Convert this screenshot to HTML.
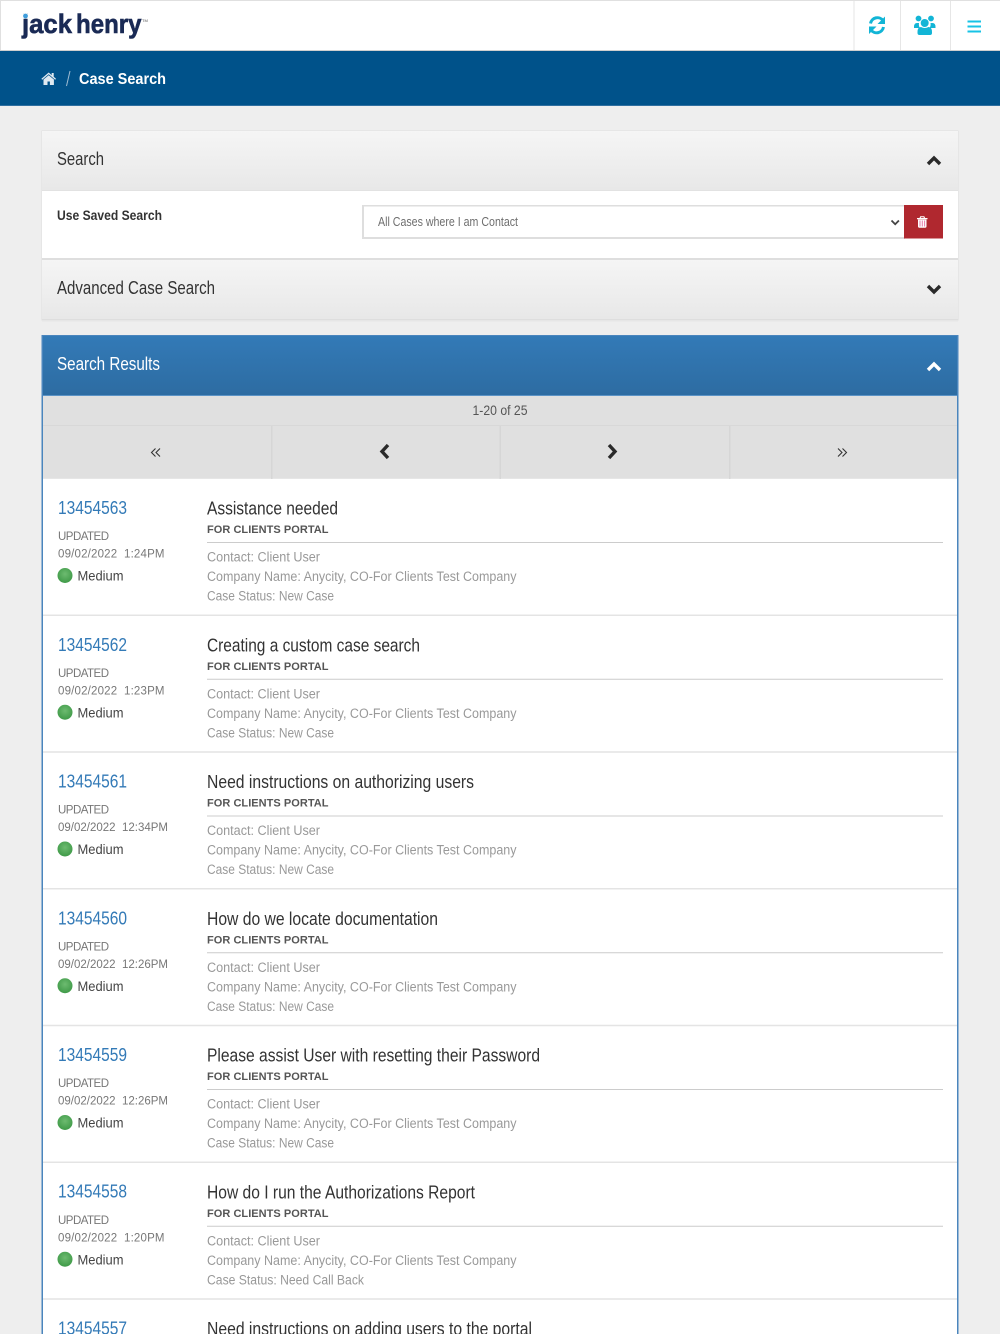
<!DOCTYPE html>
<html lang="en"><head><meta charset="utf-8"><title>Case Search</title>
<style>
html,body{margin:0;padding:0;background:#eee;width:1000px;height:1334px;overflow:hidden}
svg{display:block}
text{font-family:"Liberation Sans",sans-serif}
.n{font-family:"Liberation Sans Narrow","Liberation Sans",sans-serif}
.id{font-size:18px;fill:#337ab7}
.tt{font-size:18px;fill:#333}
.pt{font-size:11px;font-weight:700;fill:#555}
.g{font-size:13.5px;fill:#999}
.u{font-size:11.5px;fill:#777}
.m{font-size:13.5px;fill:#444}
</style></head><body>
<svg xmlns="http://www.w3.org/2000/svg" width="1000" height="1334" viewBox="0 0 1000 1334">
<defs>
<linearGradient id="gh" x1="0" y1="0" x2="0" y2="1"><stop offset="0" stop-color="#f5f5f5"/><stop offset="1" stop-color="#e8e8e8"/></linearGradient>
<linearGradient id="bh" x1="0" y1="0" x2="0" y2="1"><stop offset="0" stop-color="#337ab7"/><stop offset="1" stop-color="#2d6ca2"/></linearGradient>
<radialGradient id="dot" cx="0.5" cy="0.4" r="0.6"><stop offset="0" stop-color="#6dbb70"/><stop offset="1" stop-color="#3f9a48"/></radialGradient>
</defs>
<rect width="1000" height="1334" fill="#eee"/>

<!-- top nav -->
<rect width="1000" height="51" fill="#fff"/>
<rect width="1000" height="1" fill="#e0e0e0"/>
<rect width="1" height="51" fill="#e0e0e0"/>
<rect y="50" width="1000" height="1" fill="#cfcfcf"/>
<rect x="853.5" y="1" width="1" height="49" fill="#e6e6e6"/>
<rect x="900" y="1" width="1" height="49" fill="#e6e6e6"/>
<rect x="950" y="1" width="1" height="49" fill="#e6e6e6"/>
<text x="22" y="33" font-size="27" font-weight="700" fill="#1a2a55" stroke="#1a2a55" stroke-width="0.6" textLength="50" lengthAdjust="spacingAndGlyphs">jack</text>
<text x="76" y="33" font-size="27" font-weight="700" fill="#1a2a55" stroke="#1a2a55" stroke-width="0.6" textLength="65.500" lengthAdjust="spacingAndGlyphs">henry</text>
<circle cx="25.500" cy="15.500" r="2.900" fill="#fff"/>
<circle cx="25.500" cy="16" r="2.400" fill="#3f9ddb"/>
<text x="142" y="22" font-size="4" fill="#555">TM</text>
<!-- refresh -->
<g fill="none" stroke="#12b5d6" stroke-width="3">
<path d="M870.500 23.500a7 7 0 0 1 12.500-3"/>
<path d="M883.500 27a7 7 0 0 1-12.500 3"/>
</g>
<path d="M885 16.500v7.500h-7.500zM869 34v-7.500h7.500z" fill="#12b5d6"/>
<!-- users -->
<g fill="#12b5d6">
<circle cx="918.500" cy="18.500" r="2.900"/><circle cx="931" cy="18.500" r="2.900"/>
<circle cx="924.700" cy="23" r="4"/>
<path d="M914 27q0-4 3-4h2q-.5 3 1 5h-6zM935.500 27q0-4-3-4h-2q.5 3-1 5h6z"/>
<path d="M917.500 32q0-5 3.500-5 3.700 2 7.500 0 3.500 0 3.500 5v1q0 2-2 2h-10.500q-2 0-2-2z"/>
</g>
<!-- bars -->
<g fill="#17c3e6"><rect x="967.500" y="20.500" width="13.500" height="2"/><rect x="967.500" y="25.500" width="13.500" height="2"/><rect x="967.500" y="30.500" width="13.500" height="2"/></g>

<!-- breadcrumb -->
<rect y="51" width="1000" height="55" fill="#00528a"/>
<rect y="105" width="1000" height="1" fill="#2f6fa0"/>
<path d="M48.700 72.500l3 2.600v-2.100h2v3.800l2.300 2-.8 1-6.500-5.500-6.500 5.500-.8-1zM43.500 79.500l5.200-4.300 5.200 4.300v5.500h-4v-3.500h-2.400v3.500h-4z" fill="#dfe9f1"/>
<path d="M66.500 86l3.500-15" stroke="#9fbcd2" stroke-width="1" fill="none"/>
<text x="79" y="84" font-size="16" font-weight="700" fill="#fff" textLength="87" lengthAdjust="spacingAndGlyphs">Case Search</text>

<!-- search panel -->
<rect x="41.500" y="130.500" width="917" height="190" fill="#dedede"/>
<rect x="42" y="320" width="916" height="1.500" fill="#e6e6e6"/>
<rect x="42" y="131" width="916" height="59" fill="url(#gh)"/>
<rect x="42" y="190" width="916" height="1" fill="#e2e2e2"/>
<rect x="42" y="191" width="916" height="67" fill="#fff"/>
<rect x="42" y="258" width="916" height="2" fill="#dedede"/>
<rect x="42" y="260" width="916" height="59" fill="url(#gh)"/>
<text class="n" x="57" y="165" font-size="18" fill="#333" textLength="47" lengthAdjust="spacingAndGlyphs">Search</text>
<path d="M928 164l6-6 6 6" fill="none" stroke="#2a2a2a" stroke-width="3.400"/>
<text x="57" y="220" font-size="13.500" font-weight="700" fill="#333" textLength="105" lengthAdjust="spacingAndGlyphs">Use Saved Search</text>
<rect x="362" y="205" width="543" height="34" fill="#dedede"/>
<rect x="364" y="206.500" width="541" height="30.500" fill="#fff"/>
<text x="378" y="226" font-size="12.500" fill="#6e6e6e" textLength="140" lengthAdjust="spacingAndGlyphs">All Cases where I am Contact</text>
<path d="M891.500 220.500l3.700 3.700 3.700-3.700" fill="none" stroke="#444" stroke-width="1.800"/>
<rect x="904" y="205" width="39" height="33.500" fill="#b0282f"/>
<g fill="#fff"><path d="M917 218h10.500v1.300h-10.500zM919.500 218l.8-1.800h4l.8 1.800h-1.200l-.4-.7h-2.400l-.4.7z"/><path d="M918 219.500h8.500v7q0 1.200-1.200 1.200h-6.100q-1.200 0-1.200-1.200z"/></g>
<g fill="#e77ba8"><rect x="919.500" y="220.500" width="1" height="6"/><rect x="921.800" y="220.500" width="1" height="6"/><rect x="924.100" y="220.500" width="1" height="6"/></g>
<text class="n" x="57" y="294" font-size="18" fill="#333" textLength="158" lengthAdjust="spacingAndGlyphs">Advanced Case Search</text>
<path d="M928 286l6 6 6-6" fill="none" stroke="#2a2a2a" stroke-width="3.400"/>

<!-- results panel -->
<rect x="42" y="335" width="916" height="999" fill="#fff"/>
<rect x="42" y="336" width="916" height="59" fill="url(#bh)"/>
<rect x="42" y="335" width="916" height="1" fill="#4a85bd"/>
<rect x="42" y="395" width="916" height="1" fill="#5b93c6"/>
<text class="n" x="57" y="370" font-size="18" fill="#fff" textLength="103" lengthAdjust="spacingAndGlyphs">Search Results</text>
<path d="M928 370l6-6 6 6" fill="none" stroke="#fff" stroke-width="3.400"/>
<rect x="43" y="396" width="914" height="83" fill="#e0e0e0"/>
<rect x="43" y="425" width="914" height="1" fill="#d8d8d8"/>
<rect x="43" y="478" width="914" height="1" fill="#e6e6e6"/>
<rect x="271" y="426" width="1.500" height="53" fill="#d6d6d6"/>
<rect x="499.500" y="426" width="1.500" height="53" fill="#d6d6d6"/>
<rect x="729" y="426" width="1.500" height="53" fill="#d6d6d6"/>
<text x="472.500" y="415" font-size="13.500" fill="#555" textLength="55" lengthAdjust="spacingAndGlyphs">1-20 of 25</text>
<g fill="none" stroke="#333" stroke-width="1.100">
<path d="M155.500 448.500l-4 4 4 4M160 448.500l-4 4 4 4"/>
<path d="M838 448.500l4 4-4 4M842.500 448.500l4 4-4 4"/>
</g>
<g fill="none" stroke="#2a2a2a" stroke-width="3.400">
<path d="M388 445l-6 6.500 6 6.500"/>
<path d="M609 445l6 6.500-6 6.500"/>
</g>
<rect x="41.500" y="335" width="1.500" height="999" fill="#4a85bd"/>
<rect x="957" y="335" width="1.500" height="999" fill="#4a85bd"/>

<!-- row 1 -->
<g>
<text class="id" x="58" y="514" textLength="69" lengthAdjust="spacingAndGlyphs">13454563</text>
<text class="u" x="58" y="540" textLength="51" lengthAdjust="spacing">UPDATED</text>
<text class="u" x="58" y="557.500" textLength="106.500" lengthAdjust="spacing">09/02/2022&#160;&#160;1:24PM</text>
<circle cx="65" cy="575.500" r="7.500" fill="url(#dot)"/>
<text class="m" x="77.500" y="580.500" textLength="46" lengthAdjust="spacingAndGlyphs">Medium</text>
<text class="n tt" x="207" y="514.500" textLength="131" lengthAdjust="spacingAndGlyphs">Assistance needed</text>
<text class="pt" x="207" y="533" textLength="121.500" lengthAdjust="spacing">FOR CLIENTS PORTAL</text>
<rect x="207" y="542" width="736" height="1" fill="#ccc"/>
<text class="g" x="207" y="561.500" textLength="113" lengthAdjust="spacingAndGlyphs">Contact: Client User</text>
<text class="g" x="207" y="581" textLength="309.500" lengthAdjust="spacingAndGlyphs">Company Name: Anycity, CO-For Clients Test Company</text>
<text class="g" x="207" y="600.500" textLength="127" lengthAdjust="spacingAndGlyphs">Case Status: New Case</text>
<rect x="43" y="614.500" width="914" height="1.500" fill="#e4e4e4"/>
</g>
<!-- row 2 -->
<g transform="translate(0,136.750)">
<text class="id" x="58" y="514" textLength="69" lengthAdjust="spacingAndGlyphs">13454562</text>
<text class="u" x="58" y="540" textLength="51" lengthAdjust="spacing">UPDATED</text>
<text class="u" x="58" y="557.500" textLength="106.500" lengthAdjust="spacing">09/02/2022&#160;&#160;1:23PM</text>
<circle cx="65" cy="575.500" r="7.500" fill="url(#dot)"/>
<text class="m" x="77.500" y="580.500" textLength="46" lengthAdjust="spacingAndGlyphs">Medium</text>
<text class="n tt" x="207" y="514.500" textLength="213" lengthAdjust="spacingAndGlyphs">Creating a custom case search</text>
<text class="pt" x="207" y="533" textLength="121.500" lengthAdjust="spacing">FOR CLIENTS PORTAL</text>
<rect x="207" y="542" width="736" height="1" fill="#ccc"/>
<text class="g" x="207" y="561.500" textLength="113" lengthAdjust="spacingAndGlyphs">Contact: Client User</text>
<text class="g" x="207" y="581" textLength="309.500" lengthAdjust="spacingAndGlyphs">Company Name: Anycity, CO-For Clients Test Company</text>
<text class="g" x="207" y="600.500" textLength="127" lengthAdjust="spacingAndGlyphs">Case Status: New Case</text>
<rect x="43" y="614.500" width="914" height="1.500" fill="#e4e4e4"/>
</g>
<!-- row 3 -->
<g transform="translate(0,273.500)">
<text class="id" x="58" y="514" textLength="69" lengthAdjust="spacingAndGlyphs">13454561</text>
<text class="u" x="58" y="540" textLength="51" lengthAdjust="spacing">UPDATED</text>
<text class="u" x="58" y="557.500" textLength="110" lengthAdjust="spacing">09/02/2022&#160;&#160;12:34PM</text>
<circle cx="65" cy="575.500" r="7.500" fill="url(#dot)"/>
<text class="m" x="77.500" y="580.500" textLength="46" lengthAdjust="spacingAndGlyphs">Medium</text>
<text class="n tt" x="207" y="514.500" textLength="267" lengthAdjust="spacingAndGlyphs">Need instructions on authorizing users</text>
<text class="pt" x="207" y="533" textLength="121.500" lengthAdjust="spacing">FOR CLIENTS PORTAL</text>
<rect x="207" y="542" width="736" height="1" fill="#ccc"/>
<text class="g" x="207" y="561.500" textLength="113" lengthAdjust="spacingAndGlyphs">Contact: Client User</text>
<text class="g" x="207" y="581" textLength="309.500" lengthAdjust="spacingAndGlyphs">Company Name: Anycity, CO-For Clients Test Company</text>
<text class="g" x="207" y="600.500" textLength="127" lengthAdjust="spacingAndGlyphs">Case Status: New Case</text>
<rect x="43" y="614.500" width="914" height="1.500" fill="#e4e4e4"/>
</g>
<!-- row 4 -->
<g transform="translate(0,410.250)">
<text class="id" x="58" y="514" textLength="69" lengthAdjust="spacingAndGlyphs">13454560</text>
<text class="u" x="58" y="540" textLength="51" lengthAdjust="spacing">UPDATED</text>
<text class="u" x="58" y="557.500" textLength="110" lengthAdjust="spacing">09/02/2022&#160;&#160;12:26PM</text>
<circle cx="65" cy="575.500" r="7.500" fill="url(#dot)"/>
<text class="m" x="77.500" y="580.500" textLength="46" lengthAdjust="spacingAndGlyphs">Medium</text>
<text class="n tt" x="207" y="514.500" textLength="231" lengthAdjust="spacingAndGlyphs">How do we locate documentation</text>
<text class="pt" x="207" y="533" textLength="121.500" lengthAdjust="spacing">FOR CLIENTS PORTAL</text>
<rect x="207" y="542" width="736" height="1" fill="#ccc"/>
<text class="g" x="207" y="561.500" textLength="113" lengthAdjust="spacingAndGlyphs">Contact: Client User</text>
<text class="g" x="207" y="581" textLength="309.500" lengthAdjust="spacingAndGlyphs">Company Name: Anycity, CO-For Clients Test Company</text>
<text class="g" x="207" y="600.500" textLength="127" lengthAdjust="spacingAndGlyphs">Case Status: New Case</text>
<rect x="43" y="614.500" width="914" height="1.500" fill="#e4e4e4"/>
</g>
<!-- row 5 -->
<g transform="translate(0,547)">
<text class="id" x="58" y="514" textLength="69" lengthAdjust="spacingAndGlyphs">13454559</text>
<text class="u" x="58" y="540" textLength="51" lengthAdjust="spacing">UPDATED</text>
<text class="u" x="58" y="557.500" textLength="110" lengthAdjust="spacing">09/02/2022&#160;&#160;12:26PM</text>
<circle cx="65" cy="575.500" r="7.500" fill="url(#dot)"/>
<text class="m" x="77.500" y="580.500" textLength="46" lengthAdjust="spacingAndGlyphs">Medium</text>
<text class="n tt" x="207" y="514.500" textLength="333" lengthAdjust="spacingAndGlyphs">Please assist User with resetting their Password</text>
<text class="pt" x="207" y="533" textLength="121.500" lengthAdjust="spacing">FOR CLIENTS PORTAL</text>
<rect x="207" y="542" width="736" height="1" fill="#ccc"/>
<text class="g" x="207" y="561.500" textLength="113" lengthAdjust="spacingAndGlyphs">Contact: Client User</text>
<text class="g" x="207" y="581" textLength="309.500" lengthAdjust="spacingAndGlyphs">Company Name: Anycity, CO-For Clients Test Company</text>
<text class="g" x="207" y="600.500" textLength="127" lengthAdjust="spacingAndGlyphs">Case Status: New Case</text>
<rect x="43" y="614.500" width="914" height="1.500" fill="#e4e4e4"/>
</g>
<!-- row 6 -->
<g transform="translate(0,683.750)">
<text class="id" x="58" y="513.500" textLength="69" lengthAdjust="spacingAndGlyphs">13454558</text>
<text class="u" x="58" y="540" textLength="51" lengthAdjust="spacing">UPDATED</text>
<text class="u" x="58" y="557.500" textLength="106.500" lengthAdjust="spacing">09/02/2022&#160;&#160;1:20PM</text>
<circle cx="65" cy="575.500" r="7.500" fill="url(#dot)"/>
<text class="m" x="77.500" y="580.500" textLength="46" lengthAdjust="spacingAndGlyphs">Medium</text>
<text class="n tt" x="207" y="514.500" textLength="268" lengthAdjust="spacingAndGlyphs">How do I run the Authorizations Report</text>
<text class="pt" x="207" y="533" textLength="121.500" lengthAdjust="spacing">FOR CLIENTS PORTAL</text>
<rect x="207" y="542" width="736" height="1" fill="#ccc"/>
<text class="g" x="207" y="561.500" textLength="113" lengthAdjust="spacingAndGlyphs">Contact: Client User</text>
<text class="g" x="207" y="581" textLength="309.500" lengthAdjust="spacingAndGlyphs">Company Name: Anycity, CO-For Clients Test Company</text>
<text class="g" x="207" y="600.500" textLength="157" lengthAdjust="spacingAndGlyphs">Case Status: Need Call Back</text>
<rect x="43" y="614.500" width="914" height="1.500" fill="#e4e4e4"/>
</g>
<!-- row 7 -->
<g transform="translate(0,820.500)">
<text class="id" x="58" y="514" textLength="69" lengthAdjust="spacingAndGlyphs">13454557</text>
<text class="n tt" x="207" y="514.500" textLength="325" lengthAdjust="spacingAndGlyphs">Need instructions on adding users to the portal</text>
</g>
</svg>
</body></html>
